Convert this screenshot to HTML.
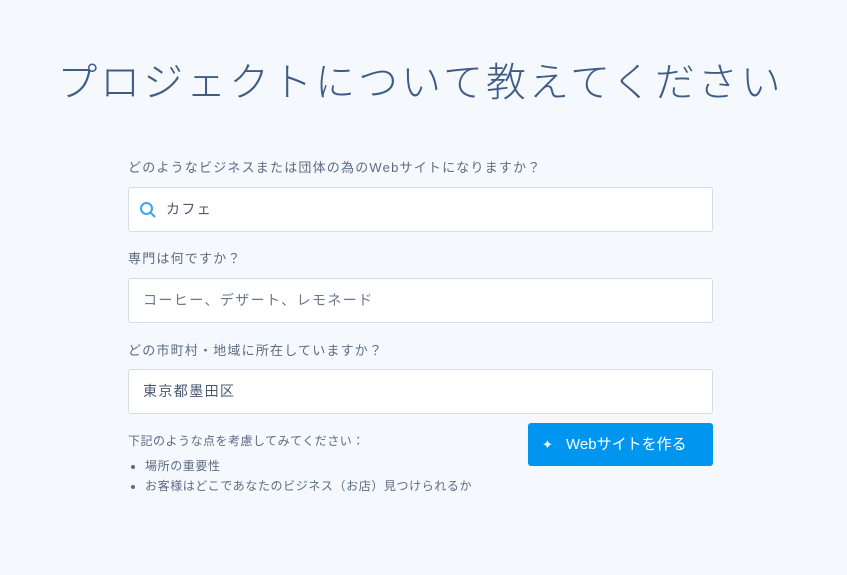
<!DOCTYPE html>
<html><head><meta charset="utf-8"><style>
body{margin:0;width:847px;height:575px;background:#f5f9fe;font-family:"Liberation Sans","Noto Sans CJK JP",sans-serif;position:relative;overflow:hidden;color:#55657e}
h1{position:absolute;left:0;width:847px;top:56px;margin:0;text-align:center;font-weight:300;font-size:40px;letter-spacing:3px;color:#3f5c85;line-height:54px;text-indent:-6px}
.l{position:absolute;left:128px;font-size:13px;letter-spacing:1.2px;color:#5c6b82}
.in{position:absolute;left:128px;width:583px;height:43px;background:#fff;border:1px solid #d7dde6;border-radius:3px;font-size:14px;line-height:43px;color:#4a5870;letter-spacing:1.4px;box-sizing:content-box}
.btn{position:absolute;left:528px;top:423px;width:185px;height:43px;background:#0096f0;border-radius:3px;color:#fff;font-size:15px;line-height:43px}
ul{position:absolute;left:128px;top:456px;margin:0;padding:0 0 0 17px;font-size:12px;line-height:20px;color:#5c6b82;letter-spacing:0.6px}
</style></head><body>
<h1>プロジェクトについて教えてください</h1>
<div class="l" style="top:157px">どのようなビジネスまたは団体の為のWebサイトになりますか？</div>
<div class="in" style="top:187px"><svg style="position:absolute;left:10px;top:13px" width="18" height="18" viewBox="0 0 18 18"><circle cx="7.5" cy="7.5" r="5.5" fill="none" stroke="#3aa6ee" stroke-width="2"/><path d="M11.5 11.5L16 16" stroke="#3aa6ee" stroke-width="2"/></svg><span style="position:absolute;left:37px">カフェ</span></div>
<div class="l" style="top:248px">専門は何ですか？</div>
<div class="in" style="top:278px"><span style="position:absolute;left:14px;color:#6a778c">コーヒー、デザート、レモネード</span></div>
<div class="l" style="top:340px">どの市町村・地域に所在していますか？</div>
<div class="in" style="top:369px"><span style="position:absolute;left:14px">東京都墨田区</span></div>
<div class="l" style="top:432px;font-size:12px;letter-spacing:0.5px">下記のような点を考慮してみてください：</div>
<ul><li>場所の重要性</li><li>お客様はどこであなたのビジネス（お店）見つけられるか</li></ul>
<div class="btn"><span style="position:absolute;left:14px;font-size:13px">✦</span><span style="position:absolute;left:38px">Webサイトを作る</span></div>
</body></html>
